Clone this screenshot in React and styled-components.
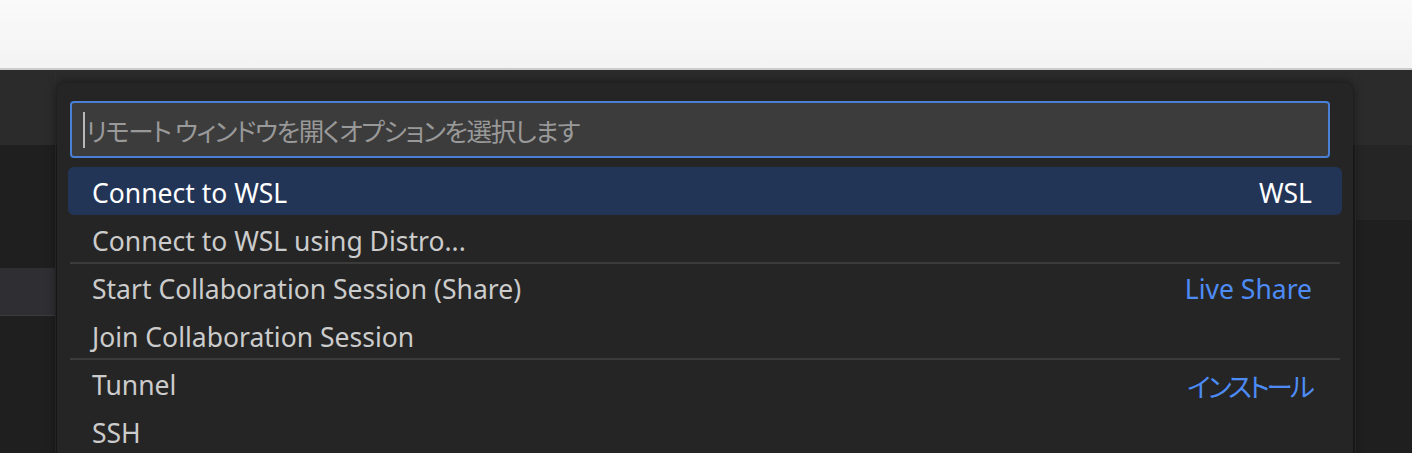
import React from "react";
import styled, { createGlobalStyle } from "styled-components";

const GlobalStyle = createGlobalStyle`
  html, body {
    margin: 0;
    padding: 0;
    background: #1f1f1f;
    font-family: "Noto Sans", "Noto Sans CJK JP", sans-serif;
    overflow: hidden;
  }
`;

const Page = styled.div`
  width: 1412px;
  height: 453px;
  display: flex;
  flex-direction: column;
  overflow: hidden;
`;

const TopBar = styled.div`
  height: 68px;
  background: linear-gradient(#fafafa, #f3f3f3);
  border-bottom: 2px solid #cbcbcb;
`;

const Workbench = styled.div`
  position: relative;
  flex: 1;
  display: flex;
  overflow: hidden;
`;

const Column = styled.div`
  display: flex;
  flex-direction: column;
  width: ${(p) => (p.$width ? `${p.$width}px` : "auto")};
  flex: ${(p) => (p.$width ? "none" : "1")};
  border-left: ${(p) => (p.$borderLeft ? "1px solid #2e2e2e" : "none")};
  border-right: ${(p) => (p.$borderRight ? "1px solid #2e2e2e" : "none")};
`;

const Band = styled.div`
  height: ${(p) => p.$h}px;
  background: ${(p) => p.$bg};
  border-bottom: ${(p) => (p.$line ? "1px solid #3b3b3b" : "none")};
  flex: ${(p) => (p.$fill ? "1" : "none")};
`;

const QuickPick = styled.div`
  position: absolute;
  left: 57px;
  top: 13px;
  width: 1296px;
  height: 380px;
  overflow: hidden;
  background: #252525;
  border-radius: 8px;
  box-shadow: 0 0 10px rgba(0, 0, 0, 0.55);
  padding: 18px 23px 0 11px;
  box-sizing: border-box;
`;

const InputBox = styled.div`
  height: 57px;
  margin: 0 0 9px 2px;
  box-sizing: border-box;
  background: #3c3c3c;
  border: 2px solid #4a7fd6;
  border-radius: 4px;
  display: flex;
  align-items: center;
  padding-left: 11px;
`;

const Caret = styled.span`
  width: 2px;
  height: 36px;
  background: #b8b8b8;
  margin-right: 1px;
`;

const Placeholder = styled.span`
  font-family: "Noto Sans CJK JP", "Noto Sans", sans-serif;
  font-feature-settings: "palt";
  font-size: 25.5px;
  color: #999999;
  letter-spacing: -1.35px;
`;

const List = styled.div`
  display: flex;
  flex-direction: column;
  margin-right: -12px;
`;

const Row = styled.div`
  position: relative;
  height: 48px;
  box-sizing: border-box;
  display: flex;
  align-items: center;
  justify-content: space-between;
  padding: 4px 30px 0 24px;
  border-radius: 6px;
  background: ${(p) => (p.$active ? "#233557" : "transparent")};
  color: ${(p) => (p.$active ? "#ffffff" : "#cccccc")};
  font-size: 26.5px;

  &::before {
    content: "";
    display: ${(p) => (p.$separator ? "block" : "none")};
    position: absolute;
    left: 2px;
    right: 2px;
    top: -1px;
    height: 2px;
    background: #3b3b3b;
  }
`;

const Label = styled.span`
  white-space: nowrap;
`;

const Detail = styled.span`
  white-space: nowrap;
  color: ${(p) => (p.$accent ? "#4d8cf5" : "inherit")};
  font-family: "Noto Sans", "Noto Sans CJK JP", sans-serif;
  font-feature-settings: "palt";
  letter-spacing: ${(p) => (p.$cjk ? "-2.8px" : "0")};
  font-size: 26.5px;
`;

const items = [
  { label: "Connect to WSL", detail: "WSL", active: true },
  { label: "Connect to WSL using Distro..." },
  { label: "Start Collaboration Session (Share)", detail: "Live Share", accent: true, separator: true },
  { label: "Join Collaboration Session" },
  { label: "Tunnel", detail: "インストール", accent: true, cjk: true, separator: true },
  { label: "SSH" },
];

export default function App() {
  return (
    <Page>
      <GlobalStyle />
      <TopBar />
      <Workbench>
        <Column $width={55} $borderRight>
          <Band $h={75} $bg="#2b2b2b" />
          <Band $h={123} $bg="#1f1f1f" />
          <Band $h={47} $bg="#2f2f33" $line />
          <Band $fill $bg="#1f1f1f" />
        </Column>
        <Column>
          <Band $h={75} $bg="#2b2b2b" />
          <Band $fill $bg="#1f1f1f" />
        </Column>
        <Column $width={56} $borderLeft>
          <Band $h={75} $bg="#2b2b2b" />
          <Band $h={75} $bg="#252525" />
          <Band $fill $bg="#1f1f1f" />
        </Column>
        <QuickPick>
          <InputBox>
            <Caret />
            <Placeholder>リモート ウィンドウを開くオプションを選択します</Placeholder>
          </InputBox>
          <List>
            {items.map((it) => (
              <Row key={it.label} $active={it.active} $separator={it.separator}>
                <Label>{it.label}</Label>
                {it.detail && (
                  <Detail $accent={it.accent} $cjk={it.cjk}>
                    {it.detail}
                  </Detail>
                )}
              </Row>
            ))}
          </List>
        </QuickPick>
      </Workbench>
    </Page>
  );
}
